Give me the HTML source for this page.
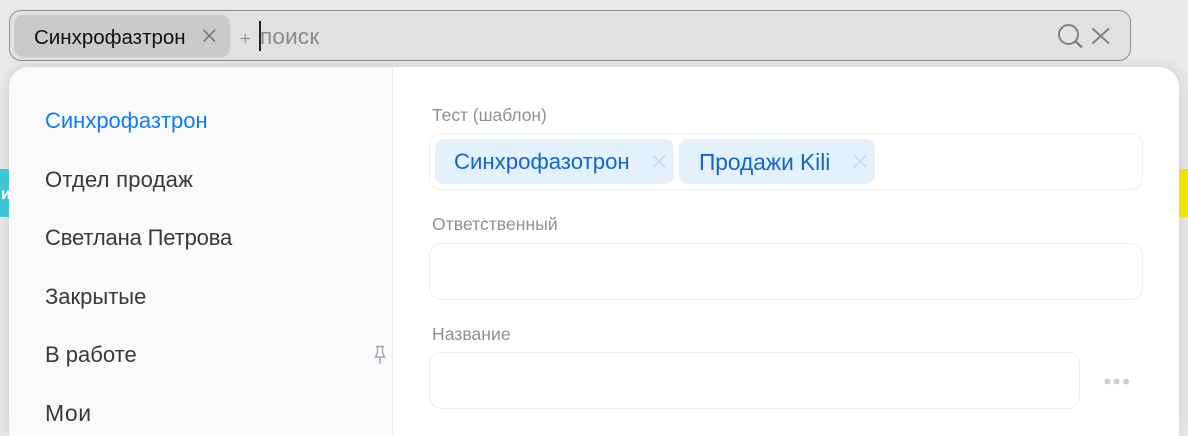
<!DOCTYPE html>
<html style="height:436px;overflow:hidden"><head><meta charset="utf-8"><style>
html,body{margin:0;padding:0}
body{width:1188px;height:436px;overflow:hidden;position:relative;background:#e9e9e9;font-family:"Liberation Sans","Noto Sans CJK SC",sans-serif}
#r{position:absolute;left:0;top:0;width:1188px;height:436px;overflow:hidden}
.a{position:absolute;box-sizing:border-box}
.t{position:absolute;white-space:nowrap;line-height:1}
.f{position:absolute;box-sizing:border-box;background:#fff;border:1px solid #efefef;border-radius:12px}
.chip{position:absolute;background:#e3f1fd;border-radius:9px;height:45px;top:139px}
.l{color:#8b9197;font-size:17.600px}
.m{color:#383838;font-size:22px;left:45px}
svg{position:absolute;overflow:hidden}
</style></head><body><div id="r">
<div class="a" style="left:9px;top:10px;width:1122px;height:51px;background:#e1e1e1;border:1px solid #8f8f8f;border-radius:12px"></div>
<div class="a" style="left:14px;top:15px;width:216px;height:42px;background:#cacaca;border-radius:9px"></div>
<div class="t" style="left:34px;top:28px;font-size:20.500px;color:#111">Синхрофазтрон</div>
<svg style="left:0;top:0" width="1188" height="436" fill="none">
<path d="M203.500 30L215 41.500M215 30L203.500 41.500" stroke="#6f6f6f" stroke-width="1.500"/>
<path d="M240.500 38.500H250M245.250 33.800V43.200" stroke="#9b8f80" stroke-width="1.200"/>
<rect x="259" y="21" width="2" height="30" fill="#222"/>
<circle cx="1068.500" cy="34.500" r="9.500" stroke="#808080" stroke-width="2"/>
<path d="M1075.500 41.500L1082 47.500" stroke="#808080" stroke-width="2.400"/>
<path d="M1092.500 28.500L1109 43.500M1109 28.500L1092.500 43.500" stroke="#808080" stroke-width="2"/>
</svg>
<div class="t" style="left:260px;top:26px;font-size:22.500px;letter-spacing:.2px;color:#8a8a8a">поиск</div>

<div class="a" style="left:9px;top:67px;width:1170px;height:369px;background:#fff;border-radius:20px 20px 0 0;overflow:hidden;box-shadow:0 0 14px rgba(0,0,0,.13)">
<div class="a" style="left:0;top:0;width:384px;height:369px;background:#f9fafc;border-right:1px solid #eceef1"></div>
</div>
<div class="a" style="left:0;top:169px;width:9px;height:48px;background:#3fc5d6"></div>
<div class="t" style="left:1px;top:187px;color:#fff;font-size:16px;font-weight:bold">и</div>
<div class="a" style="left:1179px;top:169px;width:9px;height:48px;background:#efe300"></div>

<div class="t m" style="top:110px;color:#0f7cf7">Синхрофазтрон</div>
<div class="t m" style="top:169px;letter-spacing:.22px">Отдел продаж</div>
<div class="t m" style="top:227px;letter-spacing:-.15px">Светлана Петрова</div>
<div class="t m" style="top:286px">Закрытые</div>
<div class="t m" style="top:344px">В работе</div>
<div class="t m" style="top:402px;font-size:23px;letter-spacing:.5px">Мои</div>

<div class="t l" style="left:432px;top:107px;font-size:17.400px">Тест (шаблон)</div>
<div class="f" style="left:429px;top:133px;width:714px;height:57px"></div>
<div class="chip" style="left:435px;width:239px"></div>
<div class="chip" style="left:679px;width:196px"></div>
<div class="t" style="left:454px;top:151px;font-size:22.200px;color:#1264d0">Синхрофазотрон</div>
<div class="t" style="left:699px;top:151px;font-size:22.700px;color:#1264d0">Продажи Kili</div>

<div class="t l" style="left:432px;top:216px">Ответственный</div>
<div class="f" style="left:429px;top:243px;width:714px;height:57px"></div>
<div class="t l" style="left:432px;top:326px">Название</div>
<div class="f" style="left:429px;top:352px;width:651px;height:57px"></div>

<svg style="left:0;top:0" width="1188" height="436" fill="none">
<path d="M653.500 155.500L665 167M665 155.500L653.500 167M854.500 155.500L866 167M866 155.500L854.500 167" stroke="#b9d6f3" stroke-width="1.500"/>
<path d="M376 346.500H384M377.500 347V352.500L375.500 357H384.500L382.500 352.500V347M380 357V364" stroke="#a2a7ac" stroke-width="1.400"/>
<circle cx="1107.500" cy="381.500" r="3" fill="#ccd0d4"/>
<circle cx="1116.500" cy="381.500" r="3" fill="#ccd0d4"/>
<circle cx="1126" cy="381.500" r="3" fill="#ccd0d4"/>
</svg>
</div></body></html>
